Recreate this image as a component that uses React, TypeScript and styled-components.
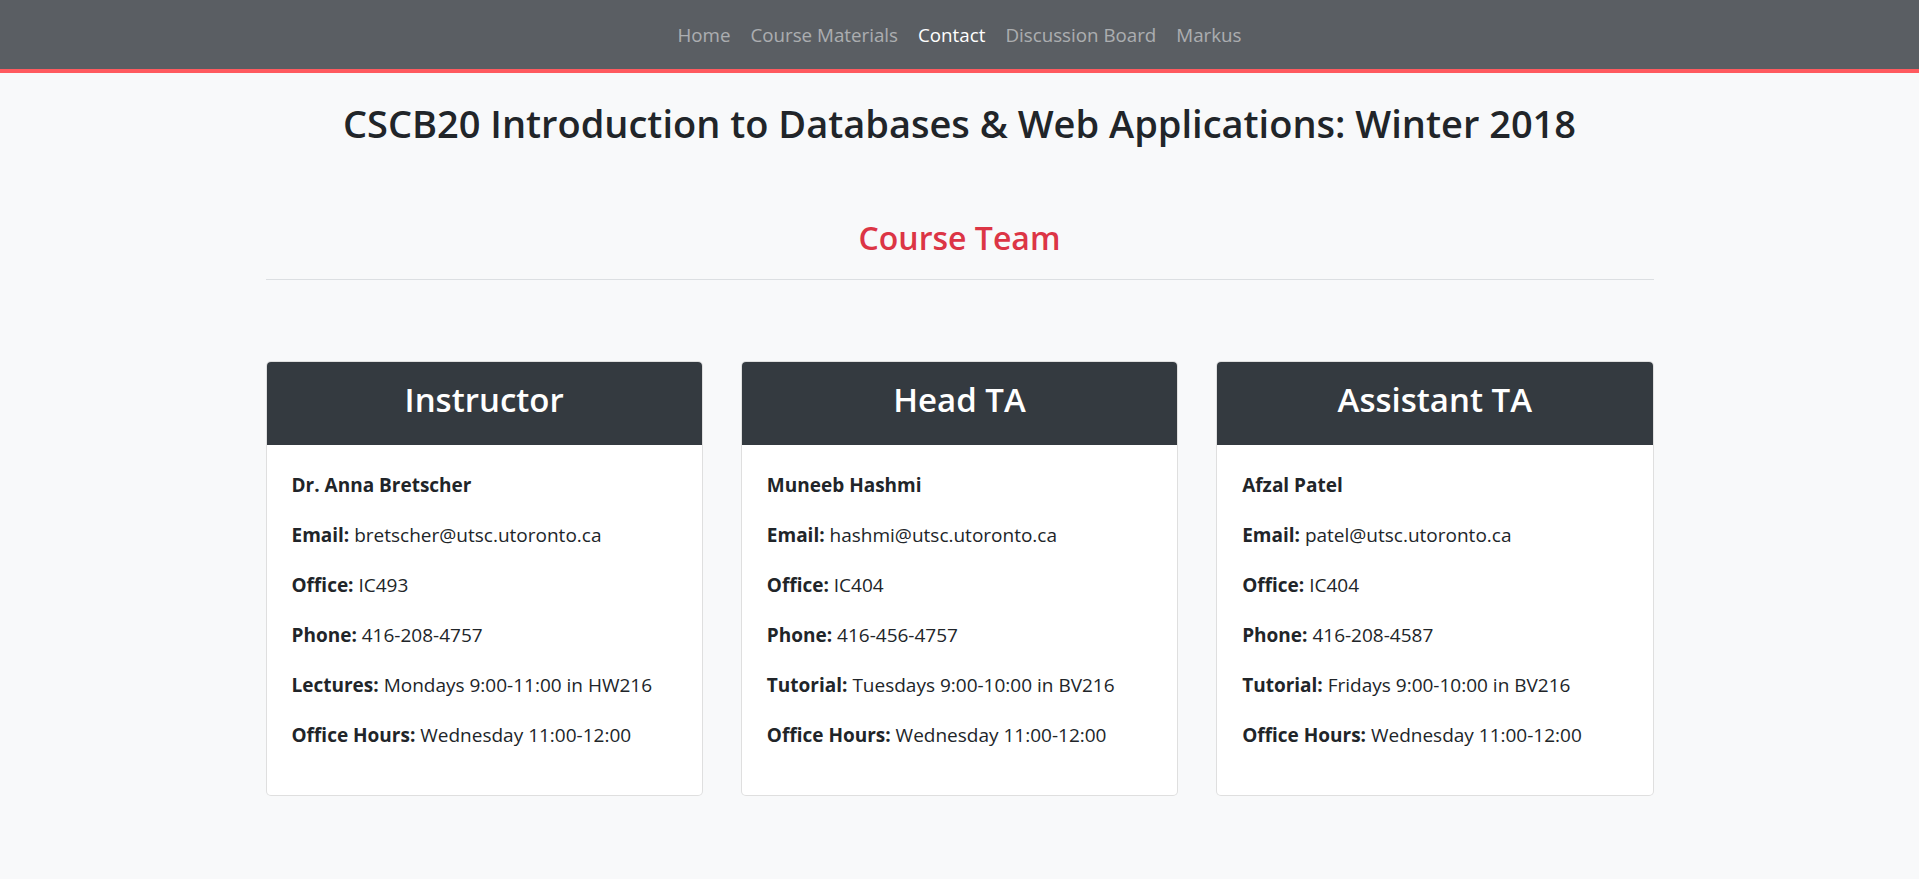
import React from "react";
import styled, { createGlobalStyle } from "styled-components";

const GlobalStyle = createGlobalStyle`
  html, body { margin: 0; padding: 0; }
  body {
    background: #f8f9fa;
    color: #212529;
    font-family: "Open Sans", "Noto Sans", sans-serif;
    font-size: 20px;
    line-height: 1.5;
  }
`;

const NavBar = styled.nav`
  height: 69px;
  background: #5a5e63;
  border-bottom: 4px solid #ff5a5f;
  display: flex;
  justify-content: center;
  align-items: center;
`;

const NavList = styled.ul`
  display: flex;
  list-style: none;
  margin: 0;
  padding: 0;
`;

const NavLink = styled.a<{ $active?: boolean }>`
  display: block;
  padding: 10px 10px;
  font-size: 18.75px;
  line-height: 30px;
  color: ${(p) => (p.$active ? "#ffffff" : "rgba(255,255,255,0.5)")};
  text-decoration: none;
  cursor: pointer;
`;

const Container = styled.main`
  width: 1388px;
  margin: 0 auto;
`;

const Title = styled.h1`
  margin: 26px 0 0;
  font-size: 38px;
  font-weight: 600;
  line-height: 48px;
  text-align: center;
`;

const SectionTitle = styled.h3`
  margin: 70px 0 0;
  font-size: 32px;
  font-weight: 600;
  line-height: 42px;
  color: #dc3545;
  text-align: center;
`;

const Rule = styled.hr`
  margin: 20px 0 0;
  border: 0;
  border-top: 1px solid #dcdfe2;
`;

const CardRow = styled.section`
  display: grid;
  grid-template-columns: repeat(3, 1fr);
  column-gap: 38px;
  margin-top: 81px;
`;

const Card = styled.article`
  background: #ffffff;
  border: 1px solid rgba(0, 0, 0, 0.125);
  border-radius: 5px;
  overflow: hidden;
`;

const CardHeader = styled.header`
  background: #343a40;
  color: #ffffff;
  padding: 14px 25px 21px;
  text-align: center;
`;

const CardTitle = styled.h2`
  margin: 0;
  font-size: 33px;
  font-weight: 600;
  line-height: 48px;
`;

const CardBody = styled.div`
  padding: 25px 25px 25px;
`;

const Line = styled.p`
  margin: 0 0 20px;
  font-size: 19px;
  line-height: 30px;
`;

const Label = styled.b`
  font-weight: 700;
`;

type Person = {
  role: string;
  name: string;
  rows: [string, string][];
};

const team: Person[] = [
  {
    role: "Instructor",
    name: "Dr. Anna Bretscher",
    rows: [
      ["Email:", "bretscher@utsc.utoronto.ca"],
      ["Office:", "IC493"],
      ["Phone:", "416-208-4757"],
      ["Lectures:", "Mondays 9:00-11:00 in HW216"],
      ["Office Hours:", "Wednesday 11:00-12:00"],
    ],
  },
  {
    role: "Head TA",
    name: "Muneeb Hashmi",
    rows: [
      ["Email:", "hashmi@utsc.utoronto.ca"],
      ["Office:", "IC404"],
      ["Phone:", "416-456-4757"],
      ["Tutorial:", "Tuesdays 9:00-10:00 in BV216"],
      ["Office Hours:", "Wednesday 11:00-12:00"],
    ],
  },
  {
    role: "Assistant TA",
    name: "Afzal Patel",
    rows: [
      ["Email:", "patel@utsc.utoronto.ca"],
      ["Office:", "IC404"],
      ["Phone:", "416-208-4587"],
      ["Tutorial:", "Fridays 9:00-10:00 in BV216"],
      ["Office Hours:", "Wednesday 11:00-12:00"],
    ],
  },
];

const links = ["Home", "Course Materials", "Contact", "Discussion Board", "Markus"];

export default function App() {
  return (
    <>
      <GlobalStyle />
      <NavBar>
        <NavList>
          {links.map((l) => (
            <li key={l}>
              <NavLink $active={l === "Contact"}>{l}</NavLink>
            </li>
          ))}
        </NavList>
      </NavBar>
      <Container>
        <Title>CSCB20 Introduction to Databases &amp; Web Applications: Winter 2018</Title>
        <SectionTitle>Course Team</SectionTitle>
        <Rule />
        <CardRow>
          {team.map((p) => (
            <Card key={p.role}>
              <CardHeader>
                <CardTitle>{p.role}</CardTitle>
              </CardHeader>
              <CardBody>
                <Line>
                  <Label>{p.name}</Label>
                </Line>
                {p.rows.map(([k, v]) => (
                  <Line key={k}>
                    <Label>{k}</Label> {v}
                  </Line>
                ))}
              </CardBody>
            </Card>
          ))}
        </CardRow>
      </Container>
    </>
  );
}
